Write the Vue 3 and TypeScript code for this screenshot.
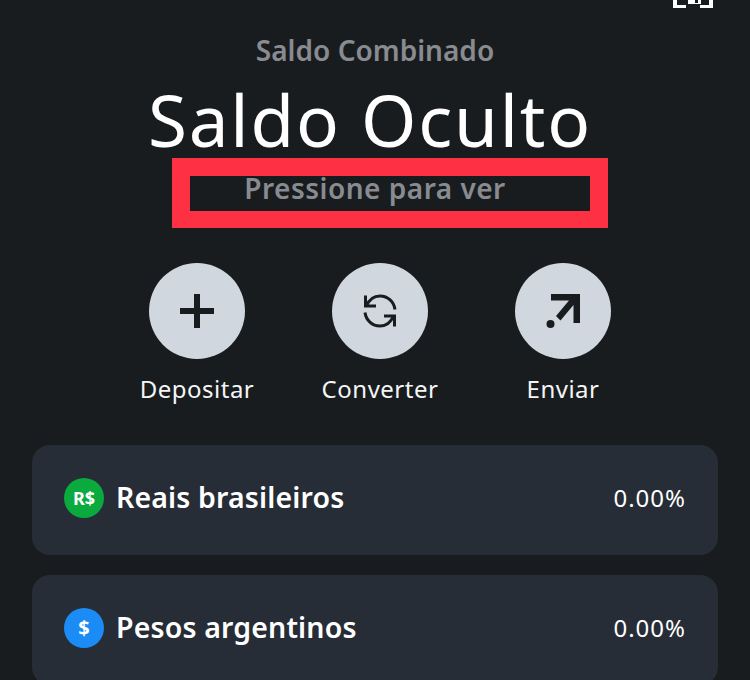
<script setup lang="ts">
interface Row { name: string; pct: string; badge: string; kind: string }
const actions: string[] = ['Depositar', 'Converter', 'Enviar']
const rows: Row[] = [
  { name: 'Reais brasileiros', pct: '0.00%', badge: 'R$', kind: 'green' },
  { name: 'Pesos argentinos', pct: '0.00%', badge: '$', kind: 'blue' }
]
</script>

<template>
  <main class="page">
    <div class="top">
      <svg class="scan" width="40" height="9" viewBox="0 0 40 9" fill="#fff">
        <path d="M0 0H4V5H13V8H0Z" />
        <path d="M40 0H36V5H27V8H40Z" />
        <path d="M15 0H22V3H25V0H28V4H15Z" />
      </svg>
    </div>
    <p class="label">Saldo Combinado</p>
    <h1 class="title">Saldo Oculto</h1>
    <div class="hint">
      <span>Pressione para ver</span>
      <div class="mark"></div>
    </div>
    <section class="actions">
      <div v-for="(a, i) in actions" :key="a" class="action">
        <div class="circle">
          <svg v-if="i === 0" width="34" height="34" viewBox="0 0 34 34" fill="#181c1f">
            <rect x="0" y="14" width="34" height="6" />
            <rect x="14" y="0" width="6" height="34" />
          </svg>
          <svg v-else-if="i === 1" width="34" height="34" viewBox="0 0 34 34" fill="none" stroke="#181c1f" stroke-width="3">
            <path d="M2.500 1.500V12H13" />
            <path d="M3.500 12C6 6 11 2 17 2C25 2 31 8 32 15.500" />
            <path d="M31.500 32.500V22H21" />
            <path d="M30.500 22C28 28 23 32 17 32C9 32 3 26 2 18.500" />
          </svg>
          <svg v-else width="34" height="34" viewBox="0 0 34 34" fill="#181c1f">
            <path d="M5 0H34V29H27.500V11L14.500 26.500L10 22L23 6.500H5Z" />
            <circle cx="4.500" cy="30" r="4" />
          </svg>
        </div>
        <span class="action-label">{{ a }}</span>
      </div>
    </section>
    <section class="list">
      <article v-for="r in rows" :key="r.name" class="card">
        <div class="badge" :class="r.kind">{{ r.badge }}</div>
        <span class="name">{{ r.name }}</span>
        <span class="pct">{{ r.pct }}</span>
      </article>
    </section>
  </main>
</template>

<style>
html, body { margin: 0; background: #181c1f; overflow: hidden; }
</style>

<style scoped>
.page {
  width: 750px;
  height: 680px;
  overflow: hidden;
  background: #181c1f;
  color: #fff;
  font-family: "Noto Sans", "Open Sans", sans-serif;
  box-sizing: border-box;
}
.top { height: 33px; display: flex; justify-content: flex-end; padding-right: 37px; align-items: flex-start; }
.label {
  margin: 0;
  height: 34px;
  line-height: 34px;
  font-size: 28px;
  font-weight: 600;
  color: #888b8f;
  text-align: center;
}
.title {
  margin: 0;
  padding: 15px 10px 0 0;
  height: 76px;
  line-height: 76px;
  font-size: 71px;
  font-weight: 400;
  text-align: center;
  letter-spacing: 1.800px;
}
.hint {
  position: relative;
  padding-top: 9px;
  height: 42px;
  line-height: 42px;
  font-size: 28px;
  font-weight: 600;
  color: #888b8f;
  text-align: center;
  letter-spacing: 0.500px;
}
.mark {
  position: absolute;
  left: 172px;
  top: 0;
  width: 436px;
  height: 70px;
  box-sizing: border-box;
  border: 18px solid #fd3044;
  border-bottom-width: 17px;
}
.actions {
  display: flex;
  justify-content: flex-start;
  gap: 63px;
  padding-left: 137px;
  margin-top: 54px;
}
.action { width: 120px; display: flex; flex-direction: column; align-items: center; }
.circle {
  width: 96px;
  height: 96px;
  border-radius: 50%;
  background: #d1d7de;
  display: flex;
  align-items: center;
  justify-content: center;
}
.action-label { margin-top: 13px; font-size: 24px; line-height: 34px; color: #f4f5f6; white-space: nowrap; letter-spacing: 0.500px; }
.list { margin-top: 39px; padding: 0 32px; display: flex; flex-direction: column; gap: 20px; }
.card {
  height: 110px;
  box-sizing: border-box;
  border-radius: 18px;
  background: #262d36;
  display: flex;
  align-items: center;
  padding: 0 32px 5px 32px;
  flex: none;
}
.badge {
  width: 40px;
  height: 40px;
  border-radius: 50%;
  display: flex;
  align-items: center;
  justify-content: center;
  font-size: 18px;
  font-weight: 700;
  color: #fff;
  flex: none;
}
.green { background: #0aaa3e; }
.blue { background: #1b8cf5; font-size: 20px; }
.name { margin: 0 0 2px 12px; font-size: 28.500px; font-weight: 600; color: #fff; letter-spacing: 0.150px; }
.pct { margin-left: auto; font-size: 24px; color: #fff; letter-spacing: 1px; }
</style>
